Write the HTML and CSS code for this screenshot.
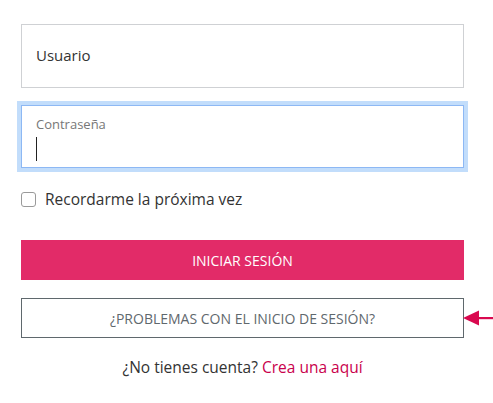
FILE: index.html
```html
<!DOCTYPE html>
<html lang="es">
<head>
<meta charset="utf-8">
<link rel="stylesheet" href="styles.css">
</head>
<body>
<form class="login">
  <div class="field">
    <span class="placeholder">Usuario</span>
  </div>
  <div class="field field--focus">
    <span class="label">Contraseña</span>
    <span class="caret"></span>
  </div>
  <label class="remember">
    <span class="checkbox"></span>
    <span class="remember-text">Recordarme la próxima vez</span>
  </label>
  <div class="btn btn--primary">INICIAR SESIÓN</div>
  <div class="help-row">
    <div class="btn btn--outline">¿PROBLEMAS CON EL INICIO DE SESIÓN?</div>
    <svg class="arrow" width="30" height="16" viewBox="0 0 30 16">
      <polygon points="0,8 16,0.5 16,15.5" fill="#d9094f"/>
      <rect x="14" y="7" width="16" height="2.2" fill="#d9094f"/>
    </svg>
  </div>
  <p class="signup">¿No tienes cuenta? <a class="signup-link">Crea una aquí</a></p>
</form>
</body>
</html>
```
FILE: styles.css
```css
* { box-sizing: border-box; }
html, body { margin: 0; padding: 0; background: #fff; }
body {
  font-family: "Open Sans", "Noto Sans", sans-serif;
  color: #333;
}
.login {
  width: 443px;
  margin: 24px 0 0 21px;
  display: flex;
  flex-direction: column;
}
.field {
  height: 64px;
  border: 1px solid #cfd1d4;
  padding: 0 14px 2px;
  display: flex;
  flex-direction: column;
  justify-content: center;
}
.placeholder {
  font-size: 15px;
  color: #333;
}
.field--focus {
  margin-top: 17px;
  height: 63px;
  border: 1px solid #8db8f4;
  box-shadow: 0 0 0 4px #c2ddfb;
  justify-content: flex-start;
  padding-top: 9px;
}
.label {
  font-size: 13px;
  color: #777;
  line-height: 19px;
}
.caret {
  display: block;
  width: 1px;
  height: 24px;
  background: #222;
  margin-top: 3px;
}
.remember {
  margin-top: 23px;
  display: flex;
  align-items: center;
  gap: 9px;
  height: 16px;
}
.checkbox {
  width: 15px;
  height: 15px;
  border: 1px solid #9a9a9a;
  border-radius: 3px;
}
.remember-text {
  font-size: 15.5px;
  color: #333;
}
.btn {
  height: 40px;
  display: flex;
  align-items: center;
  justify-content: center;
  font-size: 14px;
}
.btn--primary {
  margin-top: 33px;
  background: #e22b68;
  color: #fff;
  font-weight: 500;
}
.help-row {
  margin-top: 18px;
  position: relative;
}
.btn--outline {
  border: 1px solid #5f686d;
  color: #5f686d;
}
.arrow {
  position: absolute;
  left: 442px;
  top: 12px;
}
.signup {
  margin: 18px 0 0;
  text-align: center;
  font-size: 15.5px;
  color: #333;
  line-height: 22px;
}
.signup-link {
  color: #c9004c;
}
```
